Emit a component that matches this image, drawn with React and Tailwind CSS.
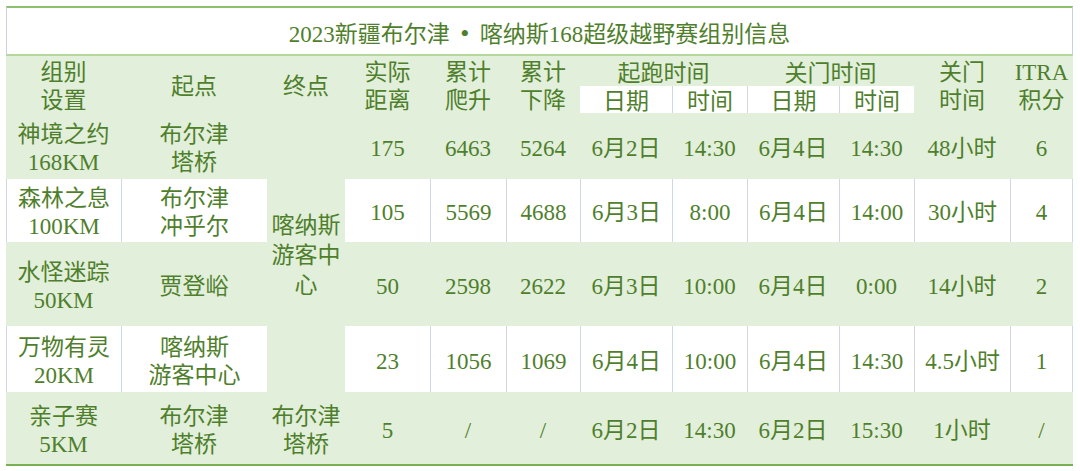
import React from 'react';

const GREEN_TEXT = 'text-[#4f7f2c]';

const rows = [
  { white: false, cells: [['神境之约', '168KM'], ['布尔津', '塔桥'], '175', '6463', '5264', '6月2日', '14:30', '6月4日', '14:30', '48小时', '6'] },
  { white: true, cells: [['森林之息', '100KM'], ['布尔津', '冲乎尔'], '105', '5569', '4688', '6月3日', '8:00', '6月4日', '14:00', '30小时', '4'] },
  { white: false, cells: [['水怪迷踪', '50KM'], '贾登峪', '50', '2598', '2622', '6月3日', '10:00', '6月4日', '0:00', '14小时', '2'] },
  { white: true, cells: [['万物有灵', '20KM'], ['喀纳斯', '游客中心'], '23', '1056', '1069', '6月4日', '10:00', '6月4日', '14:30', '4.5小时', '1'] },
];

const lastRow = [['亲子赛', '5KM'], ['布尔津', '塔桥'], ['布尔津', '塔桥'], '5', '/', '/', '6月2日', '14:30', '6月2日', '15:30', '1小时', '/'];

function Text({ value }) {
  if (Array.isArray(value)) {
    return (
      <span>
        {value[0]}
        <br />
        {value[1]}
      </span>
    );
  }
  return <span>{value}</span>;
}

function Cell({ children, className = '' }) {
  return (
    <div className={`flex items-center justify-center text-center leading-[28px] pt-[5px] ${className}`}>
      {children}
    </div>
  );
}

// column index (0-based, skipping the merged 终点 column) -> border classes for white rows
const whiteBorder = (i) => {
  if (i === 2) return '';
  if (i === 10) return 'border-l border-r border-[#d0d7e5]';
  return 'border-l border-[#d0d7e5]';
};

export default function App() {
  return (
    <div
      className={`w-[1080px] h-[471px] bg-white pt-[6px] pl-[6px] ${GREEN_TEXT} text-[23px]`}
      style={{ fontFamily: '"Liberation Serif", "Noto Sans CJK SC", serif' }}
    >
      <div className="w-[1067px]">
        <div className="h-[50px] flex items-center justify-center pt-[4px] bg-white border-t-2 border-t-[#8cc16b] border-b-2 border-b-[#b4d79c] border-l border-r border-l-[#c9d1e0] border-r-[#c9d1e0]">
          <span>
            2023新疆布尔津<span className="inline-block w-[30px] text-center text-[26px]">•</span>喀纳斯168超级越野赛组别信息
          </span>
        </div>

        <div className="grid grid-cols-[115px_146px_78px_85px_76px_74px_92px_75px_92px_75px_96px_63px] grid-rows-[30px_27px_66px_63px_84px_66px_72px] bg-[#e2efda] border-b-2 border-b-[#78b152]">
          <Cell className="row-span-2"><Text value={['组别', '设置']} /></Cell>
          <Cell className="row-span-2">起点</Cell>
          <Cell className="row-span-2">终点</Cell>
          <Cell className="row-span-2"><Text value={['实际', '距离']} /></Cell>
          <Cell className="row-span-2"><Text value={['累计', '爬升']} /></Cell>
          <Cell className="row-span-2"><Text value={['累计', '下降']} /></Cell>
          <Cell className="col-span-2">起跑时间</Cell>
          <Cell className="col-span-2">关门时间</Cell>
          <Cell className="row-span-2"><Text value={['关门', '时间']} /></Cell>
          <Cell className="row-span-2"><Text value={['ITRA', '积分']} /></Cell>
          <Cell className="bg-white pt-[3px]">日期</Cell>
          <Cell className="bg-white pt-[3px] border-l border-[#d0d7e5]">时间</Cell>
          <Cell className="bg-white pt-[3px] border-l border-[#d0d7e5]">日期</Cell>
          <Cell className="bg-white pt-[3px] border-l border-[#d0d7e5]">时间</Cell>

          <Cell className="col-start-3 row-start-3 row-span-4">
            <span className="w-[69px] leading-[30px] pt-[2px]">喀纳斯游客中心</span>
          </Cell>

          {rows.map((row, r) =>
            row.cells.map((v, i) => (
              <Cell key={`${r}-${i}`} className={row.white ? `bg-white ${whiteBorder(i)}` : ''}>
                <Text value={v} />
              </Cell>
            ))
          )}

          {lastRow.map((v, i) => (
            <Cell key={`last-${i}`}>
              <Text value={v} />
            </Cell>
          ))}
        </div>
      </div>
    </div>
  );
}
